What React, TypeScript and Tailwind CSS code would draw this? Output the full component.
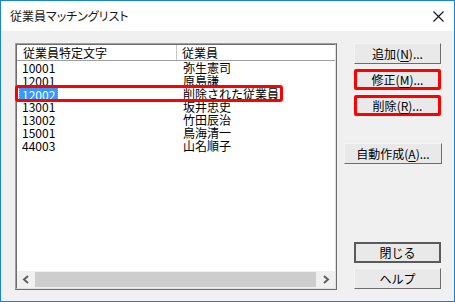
import React from 'react';

const ROWS = [
  { code: '10001', name: '弥生憲司' },
  { code: '12001', name: '原島謙' },
  { code: '12002', name: '削除された従業員', selected: true },
  { code: '13001', name: '坂井忠史' },
  { code: '13002', name: '竹田辰治' },
  { code: '15001', name: '鳥海清一' },
  { code: '44003', name: '山名順子' },
];

const Btn = ({
  label,
  hotkey,
  wide = false,
  marked = false,
  isDefault = false,
  className = '',
}: {
  label: string;
  hotkey?: string;
  wide?: boolean;
  marked?: boolean;
  isDefault?: boolean;
  className?: string;
}) => {
  let border = 'border border-t-[#f4f4f4] border-l-[#f4f4f4] border-b-[#6d6d6d] border-r-[#6d6d6d]';
  if (marked) border = 'border-[3px] border-[#ff0000] rounded-[2px]';
  if (isDefault) border = 'border-2 border-[#5a5a5a]';
  return (
    <div
      className={`flex h-[21px] items-center justify-center bg-[#e9e9e9] text-[12px] leading-[13px] text-black ${border} ${
        wide ? 'w-[98px]' : 'ml-[10px] w-[87px]'
      } ${className}`}
    >
      <span>{label}</span>
      {hotkey && (
        <>
          <span>(</span>
          <span className="underline underline-offset-2">{hotkey}</span>
          <span>)...</span>
        </>
      )}
    </div>
  );
};

export default function App() {
  return (
    <div className="flex h-[302px] w-[455px] flex-col border border-[#1883d7] bg-[#f0f0f0] font-['Noto_Sans_CJK_JP',sans-serif] text-black">
      {/* title bar */}
      <div className="flex h-[30px] shrink-0 items-center justify-between bg-white pl-[9px] pr-[10px]">
        <span className="text-[12px] [font-feature-settings:'palt'] leading-none text-[#1a1a1a]">
          従業員マッチングリスト
        </span>
        <svg width="11" height="11" viewBox="0 0 11 11" className="mt-[1px]">
          <path d="M0.5 0.5 L10.5 10.5 M10.5 0.5 L0.5 10.5" stroke="#111" strokeWidth="1.1" />
        </svg>
      </div>

      <div className="flex pl-[14px] pt-[12px]">
        {/* list view */}
        <div className="h-[247px] w-[322px] border border-t-[#a0a0a0] border-l-[#a0a0a0] border-b-[#6d6d6d] border-r-[#6d6d6d]">
          <div className="relative flex h-full w-full flex-col border border-t-[#6d6d6d] border-l-[#6d6d6d] border-b-[#e0e0e0] border-r-[#e0e0e0] bg-white">
            <div className="flex h-[16px] shrink-0 border-b border-[#a0a0a0] text-[12px] leading-[15px]">
              <div className="w-[160px] border-r border-[#c8c8c8] pl-[6px]">従業員特定文字</div>
              <div className="pl-[5px]">従業員</div>
            </div>
            <div className="flex-1 text-[12px] leading-[13px]">
              {ROWS.map((r) => (
                <div key={r.code} className="flex h-[13px]">
                  <div className="w-[161px] pl-[2px]">
                    {r.selected ? (
                      <span className="inline-block h-[13px] w-[39px] border border-dotted border-[#e3a35a] bg-[#3399ff] pl-[2px] text-white">
                        {r.code}
                      </span>
                    ) : (
                      <span className="pl-[3px]">{r.code}</span>
                    )}
                  </div>
                  <div className="pl-[5px] whitespace-nowrap">{r.name}</div>
                </div>
              ))}
            </div>
            {/* horizontal scrollbar */}
            <div className="flex h-[17px] shrink-0 items-center bg-[#f0f0f0]">
              <div className="flex h-full w-[18px] items-center justify-center">
                <svg width="8" height="9" viewBox="0 0 8 9">
                  <path d="M6 1 L2 4.5 L6 8" fill="none" stroke="#606060" strokeWidth="2" />
                </svg>
              </div>
              <div className="h-[15px] flex-1 bg-[#cdcdcd]" />
              <div className="flex h-full w-[19px] items-center justify-center">
                <svg width="8" height="9" viewBox="0 0 8 9">
                  <path d="M2 1 L6 4.5 L2 8" fill="none" stroke="#606060" strokeWidth="2" />
                </svg>
              </div>
            </div>
            {/* red annotation box */}
            <div className="absolute left-[-2px] top-[40px] h-[17px] w-[268px] rounded-[3px] border-[3px] border-[#ff0000]" />
          </div>
        </div>

        {/* buttons */}
        <div className="ml-[7px] flex h-[247px] w-[98px] flex-col">
          <Btn label="追加" hotkey="N" />
          <Btn label="修正" hotkey="M" marked className="mt-[5px]" />
          <Btn label="削除" hotkey="R" marked className="mt-[5px]" />
          <Btn label="自動作成" hotkey="A" wide className="mt-[27px]" />
          <Btn label="閉じる" isDefault className="mt-auto" />
          <Btn label="ヘルプ" className="mb-[1px] mt-[5px]" />
        </div>
      </div>
    </div>
  );
}
